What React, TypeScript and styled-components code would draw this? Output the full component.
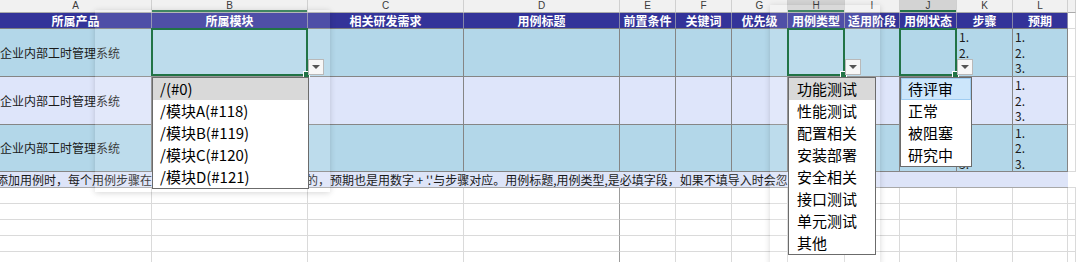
import React from "react";
import styled, { createGlobalStyle } from "styled-components";

const GlobalStyle = createGlobalStyle`
  html, body { margin: 0; padding: 0; background: #fff; overflow: hidden; }
  body { font-family: "Noto Sans CJK SC", "Noto Sans", sans-serif; }
`;

const COLS = [152, 156, 156, 156, 56, 56, 56, 57, 55, 57, 56, 55];
const LETTERS = ["A", "B", "C", "D", "E", "F", "G", "H", "I", "J", "K", "L", ""];
const HEADS = ["所属产品", "所属模块", "相关研发需求", "用例标题", "前置条件", "关键词", "优先级", "用例类型", "适用阶段", "用例状态", "步骤", "预期", ""];
const MARKED = [1, 7, 9];
const DARK_LETTER = [7, 9];

type Tone = "blue" | "lav";
const ROWS: { tone: Tone; h: number }[] = [
	{ tone: "blue", h: 48 },
	{ tone: "lav", h: 48 },
	{ tone: "blue", h: 47 },
];

type Drop = {
	items: string[];
	hl: "grey" | "blue";
	width: number;
	pad: number;
	shade?: { x: number; y: number; w: number; h: number };
};

const DROPS: Record<number, Drop> = {
	1: {
		items: ["/(#0)", "/模块A(#118)", "/模块B(#119)", "/模块C(#120)", "/模块D(#121)"],
		hl: "grey",
		width: 157,
		pad: 6,
		shade: { x: -57, y: -19, w: 235, h: 182 },
	},
	7: {
		items: ["功能测试", "性能测试", "配置相关", "安装部署", "安全相关", "接口测试", "单元测试", "其他"],
		hl: "grey",
		width: 88,
		pad: 7,
		shade: { x: -18, y: -24, w: 110, h: 260 },
	},
	9: {
		items: ["待评审", "正常", "被阻塞", "研究中"],
		hl: "blue",
		width: 72,
		pad: 6,
	},
};

const NOTE =
	"添加用例时，每个用例步骤在步骤栏中用数字 + '.' 标记序号的，预期也是用数字 + '.'与步骤对应。用例标题,用例类型,是必填字段，如果不填导入时会忽略该条用例。";

const Sheet = styled.div`
	display: grid;
	grid-template-columns: ${COLS.map((w) => w + "px").join(" ")} 1fr;
	width: 1076px;
	height: 262px;
	overflow: hidden;
	font-size: 12px;
	color: #1a1a1a;
`;

const LetterCell = styled.div<{ $dark?: boolean; $marked?: boolean }>`
	box-sizing: border-box;
	height: 13px;
	background: ${(p) => (p.$dark ? "#d3d3d3" : "#f1f1f1")};
	border-right: 1px solid #d0d0d0;
	border-bottom: 1px solid #ababab;
	box-shadow: ${(p) => (p.$marked ? "inset 0 -2px 0 #217346" : "none")};
	font-family: "Liberation Sans", "Noto Sans", sans-serif;
	font-size: 10px;
	line-height: 12px;
	text-align: center;
	color: #3a3a3a;
`;

const HeadCell = styled.div<{ $blank?: boolean }>`
	box-sizing: border-box;
	height: 16px;
	background: ${(p) => (p.$blank ? "#fff" : "#333399")};
	border-right: 1px solid ${(p) => (p.$blank ? "#dadada" : "#8585a8")};
	border-bottom: 1px solid ${(p) => (p.$blank ? "#dadada" : "#7d7d7d")};
	color: #fff;
	font-weight: 700;
	font-size: 12px;
	line-height: 15px;
	text-align: center;
	white-space: nowrap;
`;

const DataCell = styled.div<{ $tone: Tone; $h: number; $blank?: boolean }>`
	position: relative;
	box-sizing: border-box;
	height: ${(p) => p.$h}px;
	background: ${(p) => (p.$blank ? "#fff" : p.$tone === "blue" ? "#b3d7e9" : "#dee5fa")};
	border-right: 1px solid ${(p) => (p.$blank ? "#dadada" : "#858585")};
	border-bottom: 1px solid ${(p) => (p.$blank ? "#dadada" : "#858585")};
	display: flex;
	flex-direction: column;
	justify-content: center;
	white-space: nowrap;
`;

const ProductText = styled.span`
	font-size: 12px;
	line-height: 16px;
`;

const Steps = styled.div`
	align-self: stretch;
	flex: 1;
	display: flex;
	flex-direction: column;
	padding-left: 2px;
	font-size: 12px;
	line-height: 15.5px;
`;

const Selection = styled.div`
	position: absolute;
	inset: -1px -1px 0 -1px;
	border: 2px solid #217346;
	z-index: 2;
	pointer-events: none;

	&::after {
		content: "";
		position: absolute;
		right: -4px;
		bottom: -4px;
		width: 5px;
		height: 5px;
		background: #217346;
		border: 1px solid #fff;
	}
`;

const DropButton = styled.div`
	position: absolute;
	left: calc(100% + 1px);
	bottom: 1px;
	width: 16px;
	height: 16px;
	box-sizing: border-box;
	background: #f7f7f7;
	border: 1px solid #b9b9b9;
	z-index: 3;
	display: flex;
	align-items: center;
	justify-content: center;

	&::before {
		content: "";
		width: 0;
		height: 0;
		border-left: 4px solid transparent;
		border-right: 4px solid transparent;
		border-top: 4px solid #555;
	}
`;

const Shade = styled.div<{ $x: number; $y: number; $w: number; $h: number }>`
	position: absolute;
	left: ${(p) => p.$x}px;
	top: ${(p) => p.$y}px;
	width: ${(p) => p.$w}px;
	height: ${(p) => p.$h}px;
	background: rgba(255, 255, 255, 0.14);
	box-shadow: 0 1px 6px rgba(0, 0, 0, 0.16);
	z-index: 1;
	pointer-events: none;
`;

const ListBox = styled.div<{ $w: number }>`
	position: absolute;
	left: 0;
	top: calc(100% + 1px);
	width: ${(p) => p.$w}px;
	box-sizing: border-box;
	background: #fff;
	border: 1px solid #6b6b6b;
	z-index: 4;
	display: flex;
	flex-direction: column;
`;

const ListItem = styled.div<{ $hl?: "grey" | "blue"; $pad: number }>`
	box-sizing: border-box;
	height: 22px;
	line-height: 20px;
	font-size: 15px;
	color: #000;
	padding-left: ${(p) => p.$pad}px;
	white-space: nowrap;
	background: ${(p) => (p.$hl === "grey" ? "#d9d9d9" : p.$hl === "blue" ? "#cce6fb" : "transparent")};
	border: 1px solid ${(p) => (p.$hl === "blue" ? "#9fcdf2" : "transparent")};
`;

const NoteCell = styled.div`
	grid-column: 1 / span 12;
	box-sizing: border-box;
	height: 16px;
	background: #dde4f8;
	border-bottom: 1px solid #a8a8a8;
	font-size: 12px;
	line-height: 15px;
	white-space: nowrap;
	text-indent: -4px;
	overflow: hidden;
`;

const NoteTail = styled.div`
	box-sizing: border-box;
	height: 16px;
	border-bottom: 1px solid #dadada;
	background: #fff;
`;

const EmptyCell = styled.div<{ $page?: boolean }>`
	box-sizing: border-box;
	height: 16px;
	border-right: 1px solid ${(p) => (p.$page ? "#9c9c9c" : "#dadada")};
	border-bottom: 1px solid #dadada;
`;

const DropDown = ({ drop }: { drop: Drop }) => (
	<>
		{drop.shade && (
			<Shade $x={drop.shade.x} $y={drop.shade.y} $w={drop.shade.w} $h={drop.shade.h} />
		)}
		<Selection />
		<DropButton />
		<ListBox $w={drop.width}>
			{drop.items.map((it, i) => (
				<ListItem key={it} $pad={drop.pad} $hl={i === 0 ? drop.hl : undefined}>
					{it}
				</ListItem>
			))}
		</ListBox>
	</>
);

const App = () => {
	return (
		<>
			<GlobalStyle />
			<Sheet>
				{LETTERS.map((l, i) => (
					<LetterCell key={"l" + i} $dark={DARK_LETTER.includes(i)} $marked={MARKED.includes(i)}>
						{l}
					</LetterCell>
				))}
				{HEADS.map((h, i) => (
					<HeadCell key={"h" + i} $blank={i === 12}>
						{h}
					</HeadCell>
				))}
				{ROWS.map((row, r) =>
					HEADS.map((_, c) => (
						<DataCell key={`d${r}-${c}`} $tone={row.tone} $h={row.h} $blank={c === 12}>
							{c === 0 && <ProductText>企业内部工时管理系统</ProductText>}
							{(c === 10 || c === 11) && (
								<Steps>
									<span>1.</span>
									<span>2.</span>
									<span>3.</span>
								</Steps>
							)}
							{r === 0 && DROPS[c] && <DropDown drop={DROPS[c]} />}
						</DataCell>
					))
				)}
				<NoteCell>{NOTE}</NoteCell>
				<NoteTail />
				{Array.from({ length: 5 }).map((_, r) =>
					HEADS.map((__, c) => <EmptyCell key={`e${r}-${c}`} $page={c === 3} />)
				)}
			</Sheet>
		</>
	);
};

export default App;
